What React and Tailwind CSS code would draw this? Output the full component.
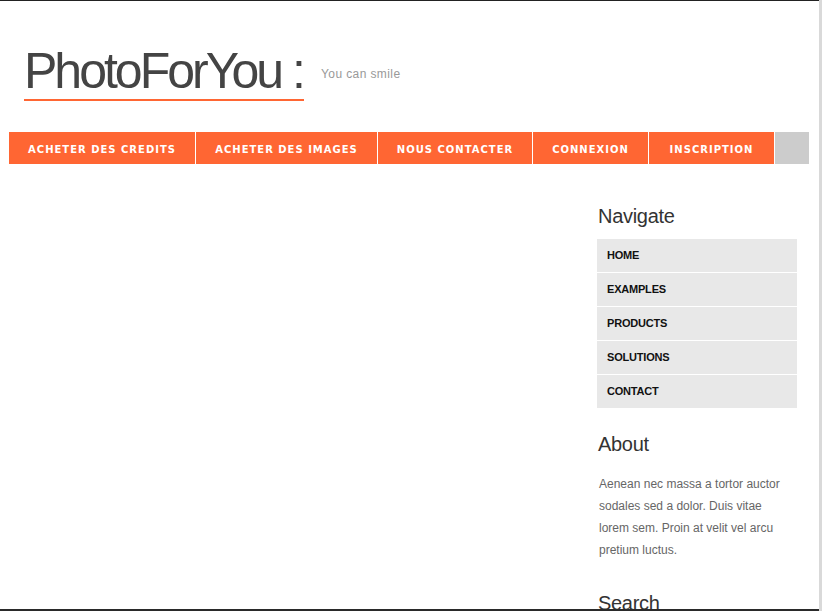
import React from "react";

const topMenu = [
  { label: "ACHETER DES CREDITS", w: "w-[187px]" },
  { label: "ACHETER DES IMAGES", w: "w-[182px]" },
  { label: "NOUS CONTACTER", w: "w-[155px]" },
  { label: "CONNEXION", w: "w-[116px]" },
  { label: "INSCRIPTION", w: "w-[126px]" },
];

const sideMenu = ["HOME", "EXAMPLES", "PRODUCTS", "SOLUTIONS", "CONTACT"];

export default function App() {
  return (
    <div className="w-[822px] h-[611px] flex bg-white overflow-hidden font-['Liberation_Sans',Arial,sans-serif]">
      {/* page */}
      <div className="w-[819px] h-full flex flex-col">
        <div className="h-[1px] bg-[#222]" />
        <div className="flex-1 overflow-hidden">
          <div className="w-[800px] ml-[9px]">
            {/* Header */}
            <div className="flex items-start px-[15px] pt-[45px]">
              <div className="flex flex-col">
                <div className="text-[50px] leading-[50px] tracking-[-3px] text-[#444] whitespace-nowrap">
                  PhotoForYou :
                </div>
                <div className="mt-[3px] h-[2px] w-[280px] bg-[#ff6633]" />
              </div>
              <div className="ml-[17px] mt-[20px] text-[12px] leading-[16px] tracking-[0.4px] text-[#999]">
                You can smile
              </div>
            </div>

            {/* Top menu */}
            <div className="mt-[31px] flex h-[32px]">
              {topMenu.map((m) => (
                <div
                  key={m.label}
                  className={`${m.w} h-full flex items-center justify-center pt-[2px] bg-[#ff6633] border-r border-white text-white text-[10px] font-bold tracking-[1px] font-['DejaVu_Sans',Verdana,sans-serif] whitespace-nowrap`}
                >
                  {m.label}
                </div>
              ))}
              <div className="w-[34px] h-full bg-[#cccccc]" />
            </div>

            {/* Body */}
            <div className="flex">
              <div className="flex-1" />
              <div className="w-[200px] mr-[12px] pt-[40px]">
                <h2 className="text-[20px] leading-[24px] tracking-[-0.3px] text-[#333] pl-[1px]">Navigate</h2>
                <ul className="mt-[11px] flex flex-col gap-[1px]">
                  {sideMenu.map((s) => (
                    <li
                      key={s}
                      className="h-[33px] flex items-center pl-[10px] bg-[#e8e8e8] text-[11px] font-bold tracking-[-0.2px] text-[#111]"
                    >
                      {s}
                    </li>
                  ))}
                </ul>

                <h2 className="mt-[24px] text-[20px] leading-[24px] tracking-[-0.3px] text-[#333] pl-[1px]">About</h2>
                <p className="mt-[17px] pl-[2px] pr-[8px] text-[12px] leading-[22px] text-[#666]">
                  Aenean nec massa a tortor auctor sodales sed a dolor. Duis vitae lorem sem. Proin at velit vel arcu pretium luctus.
                </p>

                <h2 className="mt-[30px] text-[20px] leading-[24px] tracking-[-0.3px] text-[#333] pl-[1px]">Search</h2>
              </div>
            </div>
          </div>
        </div>
        <div className="h-[2px] bg-[#2a2a2a]" />
      </div>
      <div className="w-[3px] h-full bg-[#d9d9d9]" />
    </div>
  );
}
